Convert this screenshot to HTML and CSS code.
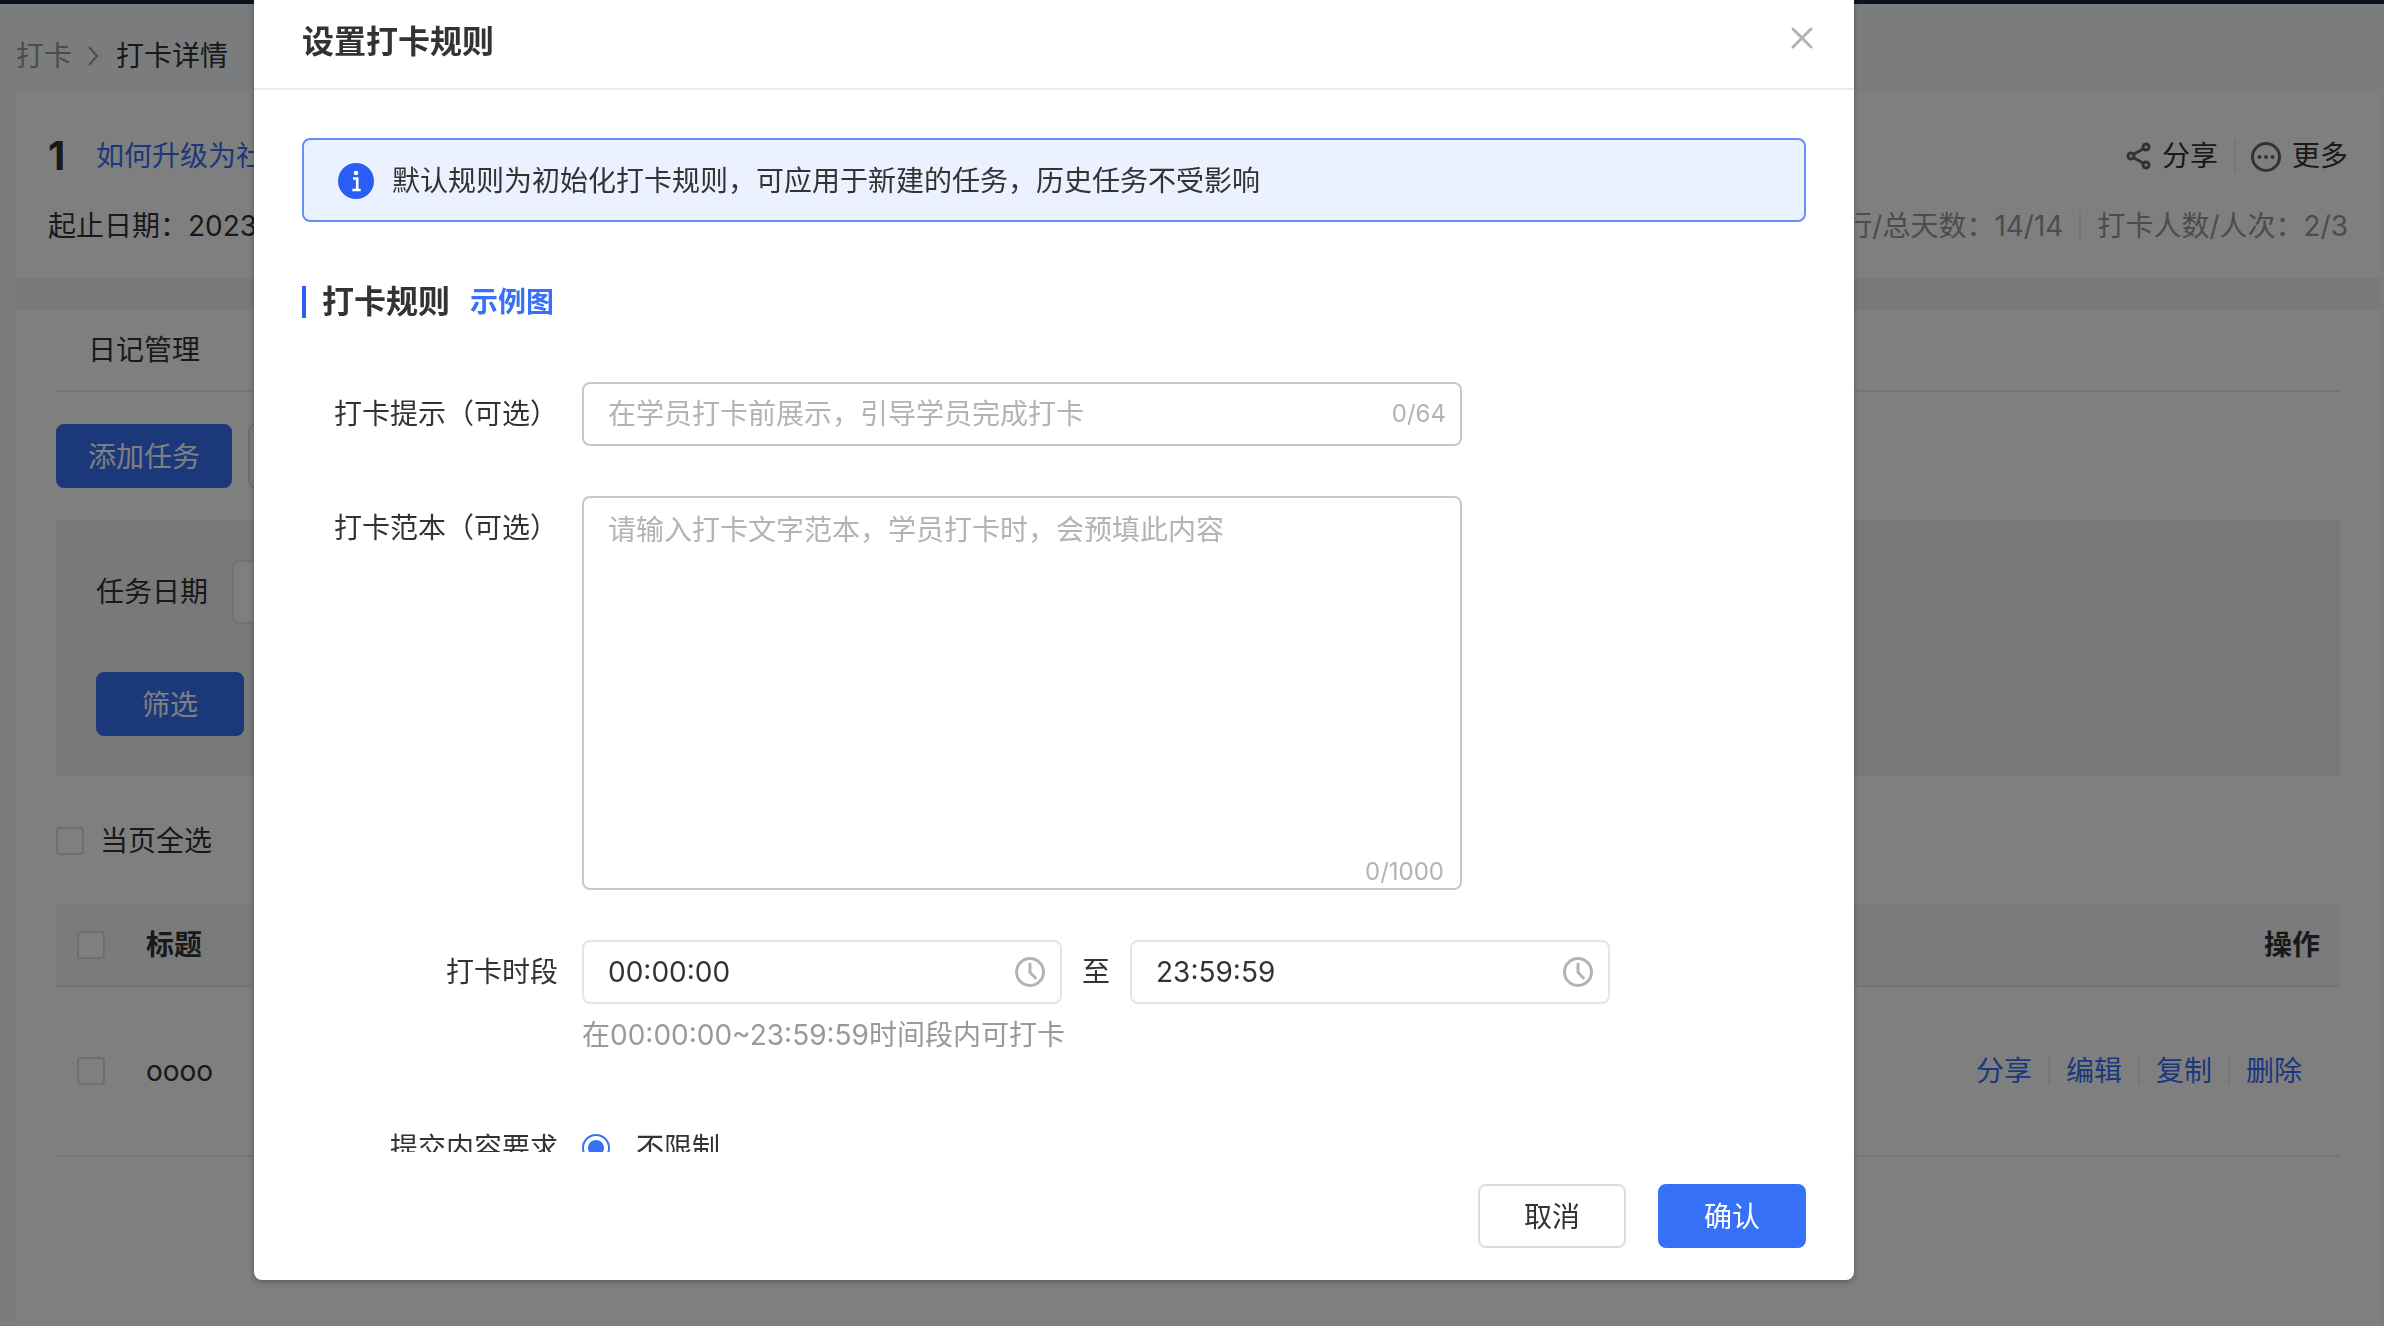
FILE: index.html
```
<!DOCTYPE html>
<html lang="zh-CN">
<head>
    <meta charset="UTF-8">
    <meta name="viewport" content="width=device-width, initial-scale=1.0">
    <title>打卡详情</title>
    <link rel="stylesheet" href="styles.css">
</head>
<body>
    <div class="page">
        <div class="topbar"></div>
        <nav class="breadcrumb">
            <a href="#">打卡</a>
            <svg width="12" height="20" viewBox="0 0 12 20" fill="none" stroke="#999" stroke-width="2"><path d="M1 1l8 9-8 9"/></svg>
            <span>打卡详情</span>
        </nav>

        <main class="content">
            <section class="card summary">
                <div class="summary-row">
                    <h1>1</h1>
                    <a class="course-link" href="#">如何升级为社群</a>
                    <div class="summary-actions">
                        <button type="button" class="icon-btn">
                            <svg width="26" height="28" viewBox="0 0 26 28" fill="none" stroke="#666" stroke-width="3">
                                <circle cx="5" cy="14" r="3"/>
                                <circle cx="20" cy="5" r="3"/>
                                <circle cx="20" cy="23" r="3"/>
                                <path d="M8 12l9-5M8 16l9 5"/>
                            </svg>
                            分享
                        </button>
                        <button type="button" class="icon-btn">
                            <svg width="32" height="32" viewBox="0 0 32 32">
                                <circle cx="16" cy="17" r="13.500" fill="none" stroke="#666" stroke-width="3"/>
                                <g fill="#666"><circle cx="9.500" cy="17" r="2"/><circle cx="16" cy="17" r="2"/><circle cx="22.500" cy="17" r="2"/></g>
                            </svg>
                            更多
                        </button>
                    </div>
                </div>
                <div class="summary-row">
                    <span>起止日期：2023</span>
                    <div class="summary-stats">
                        <span>已进行/总天数：14/14</span>
                        <span>打卡人数/人次：2/3</span>
                    </div>
                </div>
            </section>

            <section class="card manage">
                <div class="tabs">
                    <a href="#">日记管理</a>
                </div>
                <div class="toolbar">
                    <button type="button" class="btn btn-primary btn-add">添加任务</button>
                    <button type="button" class="btn"></button>
                </div>
                <form class="filter">
                    <div class="filter-row">
                        <label for="taskDate">任务日期</label>
                        <input type="text" id="taskDate" class="input">
                    </div>
                    <button type="button" class="btn btn-primary">筛选</button>
                </form>
                <div class="select-all">
                    <input type="checkbox" id="selectAll" class="checkbox">
                    <label for="selectAll">当页全选</label>
                </div>
                <table class="task-table">
                    <thead>
                        <tr>
                            <th class="col-check"><input type="checkbox" class="checkbox" aria-label="全选"></th>
                            <th>标题</th>
                            <th class="col-action">操作</th>
                        </tr>
                    </thead>
                    <tbody>
                        <tr>
                            <td class="col-check"><input type="checkbox" class="checkbox" aria-label="选择 oooo"></td>
                            <td>oooo</td>
                            <td class="col-action">
                                <div class="row-links">
                                    <a href="#">分享</a>
                                    <a href="#">编辑</a>
                                    <a href="#">复制</a>
                                    <a href="#">删除</a>
                                </div>
                            </td>
                        </tr>
                    </tbody>
                </table>
            </section>
        </main>
    </div>

    <div class="overlay">
        <div class="modal" role="dialog" aria-labelledby="modalTitle">
            <header class="modal-header">
                <h2 id="modalTitle">设置打卡规则</h2>
                <button type="button" class="close" aria-label="关闭">
                    <svg width="24" height="24" viewBox="0 0 24 24" stroke="#b3b3b3" stroke-width="3" stroke-linecap="round"><path d="M3 3l18 18M21 3L3 21"/></svg>
                </button>
            </header>

            <div class="modal-body">
                <div class="alert">
                    <svg width="36" height="36" viewBox="0 0 36 36">
                        <circle cx="18" cy="18" r="18" fill="#2b5df5"/>
                        <circle cx="18" cy="10" r="2.300" fill="#fff"/>
                        <path d="M15 15.500h4.200V27M14.300 27h8.400" fill="none" stroke="#fff" stroke-width="2.600"/>
                    </svg>
                    <span>默认规则为初始化打卡规则，可应用于新建的任务，历史任务不受影响</span>
                </div>

                <div class="section-title">
                    <h3>打卡规则</h3>
                    <a href="#">示例图</a>
                </div>

                <form class="rule-form">
                    <div class="form-row">
                        <label for="tip">打卡提示（可选）</label>
                        <div class="field">
                            <input type="text" id="tip" class="input" placeholder="在学员打卡前展示，引导学员完成打卡">
                            <span class="counter">0/64</span>
                        </div>
                    </div>
                    <div class="form-row">
                        <label for="template">打卡范本（可选）</label>
                        <div class="field">
                            <textarea id="template" class="input" placeholder="请输入打卡文字范本，学员打卡时，会预填此内容"></textarea>
                            <span class="counter">0/1000</span>
                        </div>
                    </div>
                    <div class="form-row">
                        <label for="startTime">打卡时段</label>
                        <div>
                            <div class="time-range">
                                <div class="time">
                                    <input type="text" id="startTime" class="input" value="00:00:00">
                                    <svg width="30" height="30" viewBox="0 0 30 30" fill="none" stroke="#b3b3b3" stroke-width="3" stroke-linecap="round"><circle cx="15" cy="15" r="13.500"/><path d="M15 7v8.500l5.500 5.500"/></svg>
                                </div>
                                <label for="endTime">至</label>
                                <div class="time">
                                    <input type="text" id="endTime" class="input" value="23:59:59">
                                    <svg width="30" height="30" viewBox="0 0 30 30" fill="none" stroke="#b3b3b3" stroke-width="3" stroke-linecap="round"><circle cx="15" cy="15" r="13.500"/><path d="M15 7v8.500l5.500 5.500"/></svg>
                                </div>
                            </div>
                            <p class="help">在00:00:00~23:59:59时间段内可打卡</p>
                        </div>
                    </div>
                    <div class="form-row">
                        <span class="form-label">提交内容要求</span>
                        <div class="radio-group">
                            <input type="radio" id="noLimit" name="limit" class="radio" checked>
                            <label for="noLimit">不限制</label>
                        </div>
                    </div>
                </form>
            </div>

            <footer class="modal-footer">
                <button type="button" class="btn">取消</button>
                <button type="button" class="btn btn-primary">确认</button>
            </footer>
        </div>
    </div>
</body>
</html>
```
FILE: styles.css
```
* {
    box-sizing: border-box;
}
body {
    margin: 0;
    font-family: Inter, "Noto Sans CJK SC", sans-serif;
    font-size: 28px;
    line-height: 40px;
    color: #333;
    background-color: #f5f8fc;
}
h1, h2, h3, p {
    margin: 0;
}
a {
    color: #3771f7;
    text-decoration: none;
}
button, input, textarea {
    font: inherit;
    color: inherit;
}

/* common controls */
.btn {
    min-width: 148px;
    height: 64px;
    padding: 2px 30px 0;
    border: 2px solid #dcdcdc;
    border-radius: 8px;
    background-color: #fff;
    cursor: pointer;
}
.btn-primary {
    background-color: #3771f7;
    border-color: #3771f7;
    color: #fff;
}
.input {
    display: block;
    width: 100%;
    height: 64px;
    padding: 0 24px;
    border: 2px solid #e5e5e5;
    border-radius: 8px;
    background-color: #fff;
    outline: none;
}
.input::placeholder {
    color: #b3b3b3;
    opacity: 1;
}
.checkbox {
    appearance: none;
    display: block;
    width: 28px;
    height: 28px;
    margin: 0;
    border: 2px solid #dcdcdc;
    border-radius: 4px;
    background-color: #fff;
}

/* page */
.page {
    display: flex;
    flex-direction: column;
    height: 100vh;
    overflow: hidden;
}
.topbar {
    height: 4px;
    background-color: #1a2438;
}
.breadcrumb {
    display: flex;
    align-items: center;
    gap: 16px;
    height: 88px;
    padding: 16px 16px 0;
}
.breadcrumb a {
    color: #999;
}
.content {
    display: flex;
    flex-direction: column;
    flex: 1;
    gap: 32px;
    margin: 0 4px 0 16px;
    background-color: #f3f3f3;
}
.card {
    background-color: #fff;
}
.summary {
    display: flex;
    flex-direction: column;
    gap: 30px;
    height: 186px;
    padding: 44px 32px 32px;
}
.summary-row {
    display: flex;
    align-items: center;
    height: 40px;
}
.summary-row h1 {
    width: 48px;
    font-size: 40px;
}
.summary-actions, .summary-stats {
    display: flex;
    align-items: center;
    margin-left: auto;
}
.summary-stats {
    color: #999;
}
.summary-stats span + span {
    margin-left: 16px;
    padding-left: 16px;
    border-left: 2px solid #ebebeb;
    line-height: 28px;
}
.icon-btn {
    display: flex;
    align-items: center;
    gap: 10px;
    height: 32px;
    padding: 0;
    border: none;
    background: none;
}
.icon-btn + .icon-btn {
    margin-left: 16px;
    padding-left: 14px;
    border-left: 2px solid #ebebeb;
}
.manage {
    flex: 1;
    padding: 0 40px;
}
.tabs {
    height: 82px;
    padding: 0 32px;
    border-bottom: 2px solid #ebebeb;
    line-height: 80px;
}
.tabs a {
    color: #333;
}
.toolbar {
    display: flex;
    gap: 16px;
    margin: 32px 0;
}
.btn-add {
    width: 176px;
    padding: 2px 0 0;
}
.filter {
    padding: 40px;
    background-color: #f3f3f3;
}
.filter-row {
    display: flex;
    align-items: center;
    gap: 24px;
    margin-bottom: 48px;
}
.filter-row .input {
    width: 400px;
}
.select-all {
    display: flex;
    align-items: center;
    gap: 16px;
    height: 64px;
    margin: 32px 0;
    padding-top: 2px;
}
.task-table {
    width: 100%;
    border-collapse: separate;
    border-spacing: 0;
}
.task-table th, .task-table td {
    height: 170px;
    padding: 0 20px 0 0;
    border-bottom: 2px solid #ebebeb;
    text-align: left;
}
.task-table th {
    height: 83px;
    background-color: #f5f7fb;
}
.task-table .col-check {
    width: 90px;
    padding-left: 21px;
}
.task-table .col-action {
    text-align: right;
}
.row-links {
    display: flex;
    justify-content: flex-end;
    line-height: 28px;
}
.row-links a {
    padding: 0 16px;
    border-right: 2px solid #ebebeb;
}
.row-links a:last-child {
    border-color: transparent;
}

/* modal */
.overlay {
    position: fixed;
    inset: 0;
    display: flex;
    padding: 0 530px 46px 254px;
    background-color: rgba(0, 0, 0, 0.5);
}
.modal {
    display: flex;
    flex-direction: column;
    flex: 1;
    min-width: 0;
    border-radius: 0 0 8px 8px;
    background-color: #fff;
    box-shadow: 0 2px 6px rgba(0, 0, 0, 0.3);
}
.modal-header {
    display: flex;
    justify-content: space-between;
    height: 90px;
    padding: 0 40px 0 48px;
    border-bottom: 2px solid #ebebeb;
}
.modal-header h2 {
    font-size: 32px;
    font-weight: 600;
    line-height: 84px;
}
.close {
    display: flex;
    align-items: center;
    height: 76px;
    padding: 0;
    border: none;
    background: none;
    cursor: pointer;
}
.modal-body {
    flex: 1;
    min-height: 0;
    padding: 48px 48px 0;
    overflow-y: auto;
    scrollbar-width: none;
}
.alert {
    display: flex;
    align-items: center;
    gap: 18px;
    height: 84px;
    padding: 2px 34px 0;
    border: 2px solid #6690f9;
    border-radius: 8px;
    background-color: #ebf1fe;
}
.section-title {
    display: flex;
    align-items: center;
    gap: 20px;
    height: 32px;
    margin: 64px 0;
    padding-left: 16px;
    border-left: 4px solid #2b5df5;
}
.section-title h3 {
    font-size: 32px;
    font-weight: 600;
}
.section-title a {
    font-weight: 600;
}
.rule-form {
    display: flex;
    flex-direction: column;
    gap: 50px;
}
.form-row {
    display: grid;
    grid-template-columns: 256px 1fr;
    column-gap: 24px;
    line-height: 64px;
}
.form-row > label, .form-label {
    text-align: right;
}
.field {
    position: relative;
    max-width: 880px;
}
.field .input {
    border-color: #c8c8c8;
}
.field textarea.input {
    height: 394px;
    padding: 12px 24px;
    line-height: 40px;
    resize: none;
}
.counter {
    position: absolute;
    right: 16px;
    bottom: 0;
    color: #b3b3b3;
    font-size: 24px;
}
textarea + .counter {
    right: 18px;
    line-height: 36px;
}
.time-range {
    display: flex;
    gap: 20px;
}
.time {
    position: relative;
    width: 480px;
}
.time svg {
    position: absolute;
    top: 17px;
    right: 17px;
}
.help {
    color: #999;
    line-height: 62px;
}
.radio-group {
    display: flex;
    align-items: center;
    gap: 26px;
}
.radio {
    appearance: none;
    width: 28px;
    height: 28px;
    margin: 0;
    padding: 4px;
    border: 2px solid #3771f7;
    border-radius: 50%;
    background-color: #3771f7;
    background-clip: content-box;
}
.modal-footer {
    display: flex;
    justify-content: flex-end;
    gap: 32px;
    padding: 32px 48px;
}
```
